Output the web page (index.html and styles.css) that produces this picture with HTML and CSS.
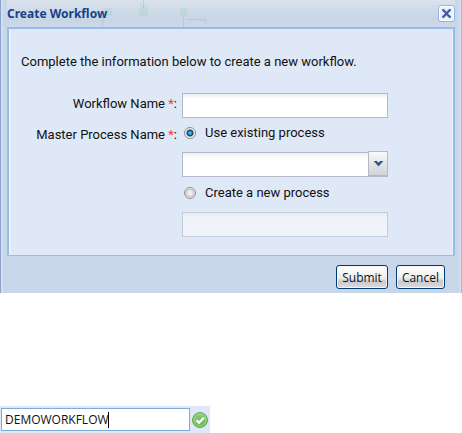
FILE: index.html
```html
<!DOCTYPE html>
<html lang="en">
<head>
    <meta charset="UTF-8">
    <title>Create Workflow</title>
    <link rel="stylesheet" href="styles.css">
</head>
<body>
    <form class="dialog">
        <div class="dialog-header">
            <!-- faint process diagram behind the title bar -->
            <svg class="header-art" width="130" height="27" viewBox="0 0 130 27" aria-hidden="true">
                <g fill="none" stroke="#aebfce">
                    <path d="M46.500 0v8M43 4l3.500 4 3.500-4M86.500 16v11M90 19.500h15q4 0 4 4M5.500 16v11"/>
                </g>
                <g fill="#b4d5d6">
                    <rect x="8" y="8" width="7" height="8"/>
                    <rect x="42" y="8" width="9" height="8"/>
                    <rect x="83" y="8" width="7" height="8"/>
                </g>
            </svg>
            <h1 class="dialog-title">Create Workflow</h1>
            <button type="button" class="close" aria-label="Close">
                <svg width="11" height="11" viewBox="0 0 11 11">
                    <path d="M1 1.500h2.500L5.500 4l2-2.500H10M1 9.500h2.500l2-2.500 2 2.500H10" fill="none" stroke="#a9b9dd"/>
                    <path d="M1.500 1.500l8 8M9.500 1.500l-8 8" stroke="#3f56a0" stroke-width="2"/>
                </svg>
            </button>
        </div>

        <div class="dialog-body">
            <p class="intro">Complete the information below to create a new workflow.</p>

            <div class="fields">
                <label class="label" for="workflowName">Workflow Name <span class="required">*</span>:</label>
                <input class="text" type="text" id="workflowName">

                <span class="label" id="masterLabel">Master Process Name <span class="required">*</span>:</span>
                <div class="choices" role="radiogroup" aria-labelledby="masterLabel">
                    <label class="choice">
                        <input type="radio" class="radio" name="process" value="existing" checked>
                        Use existing process
                    </label>
                    <div class="combo">
                        <select class="text" aria-label="Existing process">
                            <option></option>
                        </select>
                        <span class="combo-arrow">
                            <svg width="11" height="8" viewBox="0 0 11 8">
                                <path d="M0 1h4l1.500 1.500L7 1h4L5.500 7z" fill="#a9b8d3"/>
                                <path d="M1 1h2.500l2 2 2-2H10L5.500 6z" fill="#29498f"/>
                            </svg>
                        </span>
                    </div>
                    <label class="choice">
                        <input type="radio" class="radio" name="process" value="new">
                        Create a new process
                    </label>
                    <input class="text" type="text" aria-label="New process name" disabled>
                </div>
            </div>
        </div>

        <div class="dialog-footer">
            <button type="submit" class="button">Submit</button>
            <button type="button" class="button">Cancel</button>
        </div>
    </form>

    <div class="name-check">
        <div class="name-field">
            <input class="name-input" type="text" value="DEMOWORKFLOW" aria-label="Workflow name">
            <span class="caret"></span>
        </div>
        <svg class="valid" width="16" height="16" viewBox="0 0 16 16" role="img" aria-label="Valid">
            <defs>
                <linearGradient id="green" x1="0" y1="0" x2="0" y2="1">
                    <stop offset="0" stop-color="#8fcb80"/>
                    <stop offset="1" stop-color="#62b84c"/>
                </linearGradient>
            </defs>
            <circle cx="8" cy="8" r="7.500" fill="url(#green)" stroke="#62a957"/>
            <circle cx="8" cy="8" r="6" fill="none" stroke="#a2d895"/>
            <path d="M4.500 8.200l2.500 2.500 4.800-4.900" fill="none" stroke="#fff" stroke-width="2.200"/>
        </svg>
    </div>
</body>
</html>
```

FILE: styles.css
```css
* {
    box-sizing: border-box;
}
body {
    margin: 0;
    background: #fff;
    color: #111;
    font-family: Roboto, "Open Sans", sans-serif;
    font-size: 13px;
    line-height: 18px;
}

/* Dialog */
.dialog {
    padding: 0 6px;
    background: #c7d6e9;
    border-left: 1px solid #8ba3cd;
    border-right: 1px solid #a6b8d5;
    box-shadow: inset 2px 0 #d3deed, inset -2px 0 #d3deed;
}
.dialog-header {
    position: relative;
    display: flex;
    align-items: center;
    justify-content: space-between;
    height: 27px;
    background: linear-gradient(#dae2ec, #c7d5e5 70%, #cbd9ea);
}
.header-art {
    position: absolute;
    left: 90px;
    top: 0;
    opacity: 0.6;
}
.dialog-title {
    position: relative;
    margin: 0;
    color: #15428b;
    font-family: "Noto Sans", sans-serif;
    font-size: 12px;
}
.close {
    display: flex;
    align-items: center;
    justify-content: center;
    width: 17px;
    height: 17px;
    padding: 0;
    border: 1px solid #90b4e8;
    border-radius: 3px;
    background: #e9f1fc;
    box-shadow: inset 0 0 0 1px #fff;
}
.dialog-body {
    padding: 24px 65px 18px 12px;
    border: 2px solid #99bbe8;
    border-bottom-width: 1px;
    background: #dfe8f6;
    box-shadow: inset 2px 0 #eaf1fb, inset -1px 0 #eaf1fb;
}
.intro {
    margin: 0 0 22px;
    white-space: nowrap;
}

/* Form fields */
.fields {
    display: grid;
    grid-template-columns: 156px 1fr;
    gap: 6px 5px;
}
.label {
    padding-top: 2px;
    text-align: right;
    white-space: nowrap;
}
.required {
    color: #f33;
}
.text {
    display: block;
    width: 100%;
    height: 25px;
    margin: 0;
    padding: 2px 4px;
    border: 1px solid #b5b8c8;
    border-radius: 0;
    background: linear-gradient(#eceeef, #fff 5px);
    font: inherit;
    appearance: none;
}
.text:disabled {
    border-color: #c4cbdc;
    background: linear-gradient(#e7ebf0, #f0f4fa 5px);
}
.choice {
    display: flex;
    align-items: center;
    gap: 9px;
    height: 18px;
    padding-left: 2px;
}
.radio {
    width: 12px;
    height: 12px;
    margin: 0;
    border: 1px solid #8e8f8f;
    border-radius: 50%;
    background: radial-gradient(circle, #eee 2px, #c4c5c7 4px, #f4f4f4 5px);
    appearance: none;
}
.radio:checked {
    background: radial-gradient(circle at 5px 5px, #7fd5f5 0, #1581b0 2px, #143c58 3px, #eee 4px);
}
.choices .combo,
.choices .text:disabled {
    margin-top: 10px;
}
.choices .combo {
    margin-bottom: 7px;
}
.combo {
    position: relative;
}
.combo-arrow {
    position: absolute;
    top: -1px;
    right: 0;
    display: flex;
    align-items: center;
    justify-content: center;
    width: 20px;
    height: 25px;
    border: 1px solid #b5b8c8;
    background: linear-gradient(#fafafa, #e4e5e8 50%, #d1d4d9);
    pointer-events: none;
}

/* Footer */
.dialog-footer {
    display: flex;
    justify-content: flex-end;
    gap: 8px;
    padding: 9px 10px 4px;
}
.button {
    height: 24px;
    padding: 0 5px;
    border: 1px solid #003c74;
    border-radius: 3px;
    background: linear-gradient(#fff, #ededf0 55%, #c8c8ce 70%, #dcdce1);
    box-shadow: inset 0 0 0 1px #f5f6fa;
    color: #111;
    font-family: "Open Sans", sans-serif;
    font-size: 12px;
}

/* Validated name */
.name-check {
    display: inline-flex;
    align-items: center;
    gap: 2px;
    margin-top: 113px;
    padding: 2px 2px 2px 1px;
    background: #dfe8f6;
    vertical-align: top;
}
.name-field {
    position: relative;
}
.name-input {
    display: block;
    width: 189px;
    height: 23px;
    padding: 1px 3px;
    border: 1px solid #7eadd9;
    background: #fff;
    color: #111;
    font-family: "Open Sans", sans-serif;
    font-size: 12px;
}
.caret {
    position: absolute;
    top: 4px;
    left: 107px;
    width: 1px;
    height: 16px;
    background: #000;
}
```
